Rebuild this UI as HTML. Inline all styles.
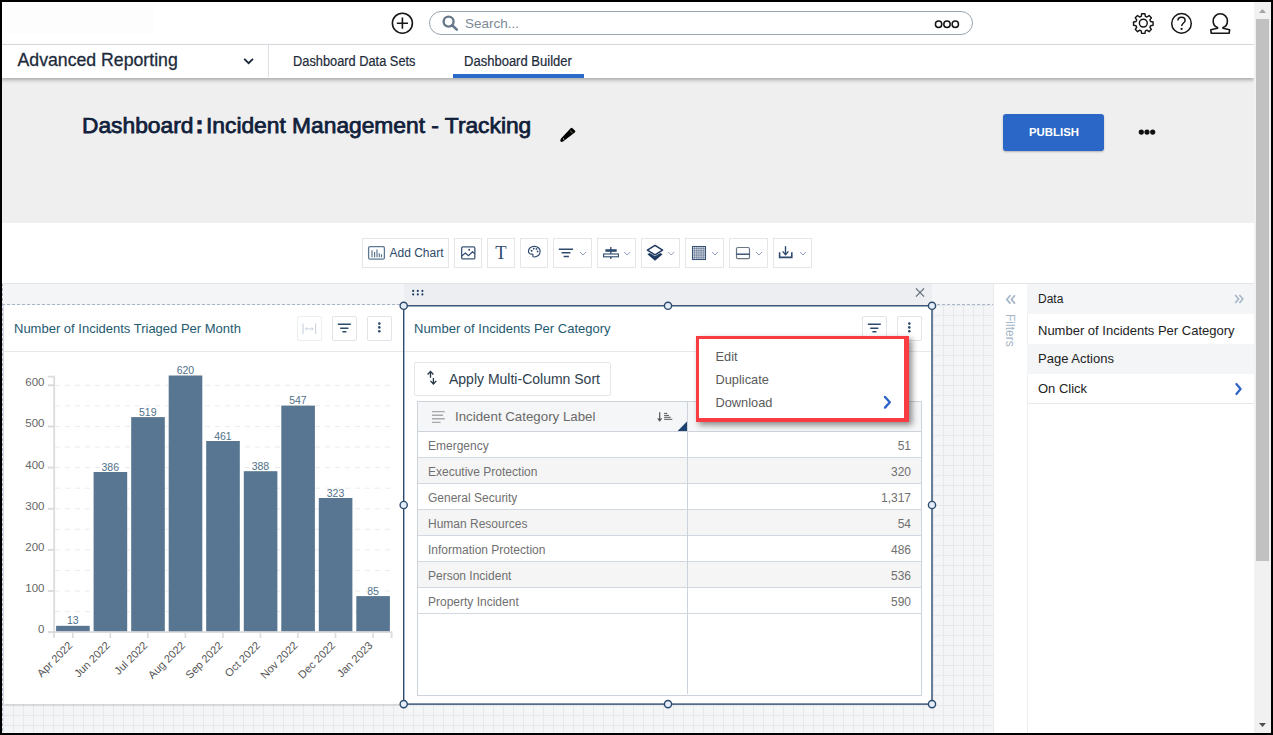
<!DOCTYPE html>
<html><head><meta charset="utf-8">
<style>
*{box-sizing:border-box;margin:0;padding:0}
html,body{width:1273px;height:735px;overflow:hidden;background:#000}
body{font-family:"Liberation Sans",sans-serif;position:relative}
.a{position:absolute}
#app{position:absolute;left:2px;top:2px;width:1269px;height:731px;background:#fff;overflow:hidden}
#pg{position:absolute;left:-2px;top:-2px;width:1273px;height:735px}
.txt{white-space:nowrap;line-height:1}
.tb{top:238px;height:30px;border:1px solid #e6e6e6;background:#fff}
.cb{width:25px;height:25px;border:1px solid #e1e4e8;border-radius:2px;background:#fff}
svg{overflow:visible}
svg text{font-family:"Liberation Sans",sans-serif}
</style></head>
<body>
<div id="app"><div id="pg">
<!-- top header -->
<div class="a" style="left:0;top:0;width:1254px;height:45px;background:#fff;border-bottom:1px solid #dde1e6"></div>
<div class="a" style="left:5px;top:3px;width:149px;height:31px;background:#fdfdfd"></div>
<!-- plus icon -->
<svg class="a" style="left:390px;top:11px" width="25" height="25" viewBox="0 0 25 25"><circle cx="12.4" cy="12.2" r="10" fill="none" stroke="#161616" stroke-width="1.6"/><path d="M12.4,6.6V17.8M6.8,12.2H18" stroke="#161616" stroke-width="1.6"/></svg>
<!-- search -->
<div class="a" style="left:429px;top:11px;width:544px;height:24px;border:1px solid #9aa4ae;border-radius:12px;background:#fff"></div>
<svg class="a" style="left:441px;top:14px" width="19" height="18" viewBox="0 0 19 18"><circle cx="7.6" cy="7.6" r="5" fill="none" stroke="#66788a" stroke-width="2.4"/><path d="M11.2,11.2L15.8,15.6" stroke="#66788a" stroke-width="2.6" stroke-linecap="round"/></svg>
<div class="a txt" style="left:465px;top:16.5px;font-size:13.5px;color:#7b8996">Search...</div>
<svg class="a" style="left:933px;top:19px" width="28" height="11" viewBox="0 0 28 11"><g fill="none" stroke="#141414" stroke-width="1.5"><circle cx="5.6" cy="5.3" r="3.2"/><circle cx="14" cy="5.3" r="3.2"/><circle cx="22.3" cy="5.3" r="3.2"/></g></svg>
<!-- gear -->
<svg class="a" style="left:1132.3px;top:12px" width="23" height="23" viewBox="0 0 24 24"><path fill="none" stroke="#161616" stroke-width="1.5" stroke-linejoin="round" d="M10.1,1.9h3.4l.5,2.6 1.6.7 2.2-1.5 2.4,2.4-1.5,2.2.7,1.6 2.6.5v3.4l-2.6.5-.7,1.6 1.5,2.2-2.4,2.4-2.2-1.5-1.6.7-.5,2.6h-3.4l-.5-2.6-1.6-.7-2.2,1.5-2.4-2.4 1.5-2.2-.7-1.6-2.6-.5v-3.4l2.6-.5.7-1.6-1.5-2.2 2.4-2.4 2.2,1.5 1.6-.7z"/><circle cx="11.8" cy="11.6" r="4.1" fill="none" stroke="#161616" stroke-width="1.5"/></svg>
<!-- help -->
<svg class="a" style="left:1169px;top:11px" width="25" height="25" viewBox="0 0 25 25"><circle cx="12.5" cy="12.4" r="9.8" fill="none" stroke="#161616" stroke-width="1.5"/><path d="M8.9,9.6c0-2.1 1.6-3.4 3.6-3.4s3.6,1.3 3.6,3.2c0,2.6-3.4,2.6-3.4,5.7" fill="none" stroke="#161616" stroke-width="1.5"/><circle cx="12.6" cy="17.9" r="1.1" fill="#161616"/></svg>
<!-- user -->
<svg class="a" style="left:1208.1px;top:11px" width="25" height="25" viewBox="0 0 25 25"><path fill="none" stroke="#161616" stroke-width="1.6" stroke-linejoin="round" d="M9.6,16.6C6.6,15.4 5.2,12.6 5.2,9.9c0-4.1 3.2-7.1 7.1-7.1s7.1,3 7.1,7.1c0,2.7-1.4,5.5-4.4,6.7v.6l6.6,1.5-.4,3.5H3.2l-.4-3.5 6.8-1.5z"/></svg>

<!-- gray header -->
<div class="a" style="left:0;top:78px;width:1254px;height:145px;background:#efefef"></div>
<!-- nav -->
<div class="a" style="left:0;top:45px;width:1254px;height:33px;background:#fff;box-shadow:0 2px 4px rgba(0,0,0,.30)"></div>
<div class="a txt" style="left:17.5px;top:52px;font-size:17.7px;color:#1d2b3b;-webkit-text-stroke:.3px #1d2b3b">Advanced Reporting</div>
<svg class="a" style="left:242px;top:56px" width="13" height="10" viewBox="0 0 13 10"><path d="M2.2,2.9L6.6,7.1L11,2.9" fill="none" stroke="#1b2a3a" stroke-width="1.9"/></svg>
<div class="a" style="left:268px;top:45px;width:1px;height:32px;background:#dde1e6"></div>
<div class="a txt" style="left:293px;top:54.2px;font-size:14px;color:#1d2b3b;-webkit-text-stroke:.2px #1d2b3b;transform-origin:0 0;transform:scaleX(.915)">Dashboard Data Sets</div>
<div class="a txt" style="left:464px;top:54.2px;font-size:14px;color:#1d2b3b;-webkit-text-stroke:.2px #1d2b3b;transform-origin:0 0;transform:scaleX(.93)">Dashboard Builder</div>
<div class="a" style="left:453px;top:74px;width:131px;height:4px;background:#2a6ac8"></div>

<div class="a txt" style="left:81.8px;top:115.2px;font-size:22px;color:#10203a;-webkit-text-stroke:.75px #10203a;transform-origin:0 0;transform:scaleX(1.035)">Dashboard<span style="margin:0 2.5px 0 2px;font-size:23px;line-height:0;font-weight:bold">:</span>Incident Management - Tracking</div>
<svg class="a" style="left:559px;top:126px" width="18" height="16" viewBox="0 0 18 16"><path d="M3.6,14.2L2.6,14.6L3,13.4L12.6,3.2L15,5.4z" fill="#000" stroke="#000" stroke-width="2.6" stroke-linejoin="round"/><path d="M11.2,4.8L13.4,6.9" stroke="#f0d9a8" stroke-width=".7"/><path d="M4,12.6L5.2,13.7" stroke="#fff" stroke-width="1"/></svg>
<div class="a" style="left:1003px;top:114px;width:101px;height:37px;background:#2b67c6;border-radius:3px;box-shadow:0 1px 2px rgba(0,0,0,.25)"></div>
<div class="a txt" style="left:1003.5px;top:126.6px;width:101px;text-align:center;font-size:11.4px;font-weight:bold;color:#fff">PUBLISH</div>
<svg class="a" style="left:1137px;top:128px" width="20" height="8" viewBox="0 0 20 8"><circle cx="4.3" cy="4.1" r="2.6" fill="#111"/><circle cx="10" cy="4.1" r="2.6" fill="#111"/><circle cx="15.7" cy="4.1" r="2.6" fill="#111"/></svg>
<!-- toolbar white -->
<div class="a" style="left:0;top:223px;width:1254px;height:60px;background:#fff"></div>
<div class="a tb" style="left:362px;width:87px"></div>
<svg class="a" style="left:367px;top:245px" width="19" height="16" viewBox="0 0 19 16"><rect x="1.6" y="1.6" width="15.8" height="12.6" rx="1.5" fill="none" stroke="#5d7793" stroke-width="1.3"/><path d="M5,5.2V12.2M7.6,7V12.2M10,4.6V12.2M12.3,8.2V12.2M14.5,9.2V12.2" stroke="#5d7793" stroke-width="1.2"/></svg>
<div class="a txt" style="left:389.5px;top:246.5px;font-size:12px;color:#2e4a6a">Add Chart</div>
<div class="a tb" style="left:454px;width:28px"></div>
<svg class="a" style="left:459px;top:245px" width="18" height="16" viewBox="0 0 18 16"><rect x="2.65" y="1.95" width="13.2" height="12" rx="1.3" fill="none" stroke="#3d5776" stroke-width="1.3"/><path d="M2.7,11L6.4,8L9.4,10.7L13.5,6.9L15.8,8.8" fill="none" stroke="#2e4a6e" stroke-width="1.2"/><circle cx="10.2" cy="4.7" r="1" fill="#2e4a6e"/></svg>
<div class="a tb" style="left:487px;width:28px"></div>
<div class="a txt" style="left:495.3px;top:243.5px;font-family:'Liberation Serif',serif;font-size:18.5px;color:#2e4a6e">T</div>
<div class="a tb" style="left:520px;width:28px"></div>
<svg class="a" style="left:526.6px;top:245.2px" width="14.6" height="12.8" viewBox="0 0 16 14"><path d="M8,1.4C4.4,1.4 1.6,3.8 1.6,6.8c0,2 1.6,3.4 3.3,3.1 1.2-.2 1.9.3 1.6,1.4-.4,1.3.6,2 1.8,1.8 3.6-.5 6.1-3.1 6.1-6.2S11.6,1.4 8,1.4z" fill="none" stroke="#2e4a6e" stroke-width="1.3"/><circle cx="5" cy="6.2" r="1.1" fill="#2e4a6e"/><circle cx="7.4" cy="4" r="1" fill="#2e4a6e"/><circle cx="10.4" cy="4.3" r="1" fill="#2e4a6e"/><circle cx="11.6" cy="7" r="1" fill="#2e4a6e"/></svg>
<div class="a tb" style="left:553px;width:39px"></div>
<svg class="a" style="left:557px;top:246px" width="18" height="12" viewBox="0 0 18 12"><path d="M1.8,3.2H16M4.6,6.7H13.4M6.6,10.4H11.9" stroke="#2e4a6e" stroke-width="1.5"/></svg>
<div class="a tb" style="left:597px;width:39px"></div>
<svg class="a" style="left:602px;top:246px" width="18" height="14" viewBox="0 0 18 14"><path d="M8.8,1V13" stroke="#2e4a6e" stroke-width="1.3"/><rect x="3.4" y="3.2" width="11.3" height="2.6" fill="#2e4a6e"/><rect x="1.6" y="8" width="14.8" height="2.8" fill="#fff" stroke="#2e4a6e" stroke-width="1.1"/></svg>
<div class="a tb" style="left:641px;width:39px"></div>
<svg class="a" style="left:645px;top:244px" width="20" height="18" viewBox="0 0 20 18"><path d="M10,1.4L17.6,6.2L10,10.8L2.4,6.2z" fill="none" stroke="#1f3a60" stroke-width="1.5" stroke-linejoin="round"/><path d="M2.4,10.2L4.6,8.9L10,12.2L15.4,8.9L17.6,10.2L10,16.8z" fill="#1f3a60"/></svg>
<div class="a tb" style="left:685px;width:39px"></div>
<svg class="a" style="left:691px;top:245px" width="16" height="16" viewBox="0 0 16 16"><g stroke="#3a5577" stroke-width=".55" fill="none"><rect x="1.5" y="1.5" width="13" height="13" stroke-width="1.1"/><path d="M3.4,1.5V14.5M5.3,1.5V14.5M7.1,1.5V14.5M9,1.5V14.5M10.8,1.5V14.5M12.7,1.5V14.5M1.5,3.4H14.5M1.5,5.3H14.5M1.5,7.1H14.5M1.5,9H14.5M1.5,10.8H14.5M1.5,12.7H14.5"/></g></svg>
<div class="a tb" style="left:729px;width:39px"></div>
<svg class="a" style="left:735px;top:246px" width="16" height="14" viewBox="0 0 16 14"><rect x="1.5" y="1.5" width="13" height="11.2" rx="1.4" fill="none" stroke="#6b7682" stroke-width="1.2"/><path d="M1.5,8.2H14.5" stroke="#2e4a6e" stroke-width="1.4"/></svg>
<div class="a tb" style="left:773px;width:39px"></div>
<svg class="a" style="left:778px;top:245px" width="16" height="14" viewBox="0 0 16 14"><path d="M7.5,1.2V9.4" stroke="#2e4a6e" stroke-width="1.4"/><path d="M4.6,6.4L7.5,9.6L10.4,6.4" fill="none" stroke="#2e4a6e" stroke-width="1.4"/><path d="M1.6,7.2V12.4H13.8V7.2" fill="none" stroke="#2e4a6e" stroke-width="1.6"/></svg>
<svg class="a" style="left:0;top:0;pointer-events:none" width="830" height="270" viewBox="0 0 830 270"><g fill="none" stroke="#8e9bc4" stroke-width="1"><path d="M580,252L583,255L586,252"/><path d="M624.2,252L627.2,255L630.2,252"/><path d="M668.2,252L671.2,255L674.2,252"/><path d="M712,252L715,255L718,252"/><path d="M756,252L759,255L762,252"/><path d="M800,252L803,255L806,252"/></g></svg>
<!-- canvas -->
<div class="a" style="left:0;top:283px;width:993px;height:452px;background:#f4f5f7;border-top:1px solid #e3e5e8"></div>
<div class="a" style="left:0;top:305px;width:993px;height:430px;background-image:linear-gradient(to right,#e7e8eb 1px,transparent 1px),linear-gradient(to bottom,#e7e8eb 1px,transparent 1px);background-size:10px 10px;background-position:3px 10px"></div>
<!-- dashed guides -->
<div class="a" style="left:2px;top:304px;width:991px;height:1px;background-image:linear-gradient(to right,#a9b7c6 3px,transparent 3px);background-size:5px 1px"></div>
<div class="a" style="left:2px;top:283px;width:1px;height:452px;background-image:linear-gradient(to bottom,#a9b7c6 3px,transparent 3px);background-size:1px 5px"></div>

<!-- card 1 -->
<div class="a" style="left:4px;top:305px;width:400px;height:399px;background:#fff;box-shadow:0 1px 2px rgba(0,0,0,.18)"></div>
<div class="a txt" style="left:14px;top:322.3px;font-size:13px;color:#245a70">Number of Incidents Triaged Per Month</div>
<div class="a cb" style="left:297px;top:316px;border-color:#eceef0"></div>
<svg class="a" style="left:297px;top:316px" width="25" height="25" viewBox="0 0 25 25"><path d="M6,7.6V18M18.6,7.6V18" stroke="#cdd6e0" stroke-width="1.2"/><path d="M8.4,12.8H16.2M10,11.3L8.4,12.8L10,14.3M14.6,11.3L16.2,12.8L14.6,14.3" fill="none" stroke="#cdd6e0" stroke-width="1"/></svg>
<div class="a cb" style="left:332px;top:316px"></div>
<svg class="a" style="left:332px;top:316px" width="25" height="25" viewBox="0 0 25 25"><path d="M5.8,8.2H18.8M8.2,12.2H16.4M10.4,15.8H14.4" stroke="#2b4a6d" stroke-width="1.6"/></svg>
<div class="a cb" style="left:367px;top:316px"></div>
<svg class="a" style="left:367px;top:316px" width="25" height="25" viewBox="0 0 25 25"><circle cx="12.3" cy="7.6" r="1.3" fill="#2b4a6d"/><circle cx="12.3" cy="11.4" r="1.3" fill="#2b4a6d"/><circle cx="12.3" cy="15.2" r="1.3" fill="#2b4a6d"/></svg>
<div class="a" style="left:4px;top:351px;width:400px;height:1px;background:#e6e8eb"></div>
<svg class="a" style="left:0;top:0" width="420" height="735" viewBox="0 0 420 735">
<line x1="55" x2="391" y1="611.6" y2="611.6" stroke="#ebebeb" stroke-width="1" stroke-dasharray="5,5"/>
<line x1="55" x2="391" y1="591.1" y2="591.1" stroke="#ebebeb" stroke-width="1" stroke-dasharray="5,5"/>
<line x1="55" x2="391" y1="570.5" y2="570.5" stroke="#ebebeb" stroke-width="1" stroke-dasharray="5,5"/>
<line x1="55" x2="391" y1="549.9" y2="549.9" stroke="#ebebeb" stroke-width="1" stroke-dasharray="5,5"/>
<line x1="55" x2="391" y1="529.3" y2="529.3" stroke="#ebebeb" stroke-width="1" stroke-dasharray="5,5"/>
<line x1="55" x2="391" y1="508.8" y2="508.8" stroke="#ebebeb" stroke-width="1" stroke-dasharray="5,5"/>
<line x1="55" x2="391" y1="488.2" y2="488.2" stroke="#ebebeb" stroke-width="1" stroke-dasharray="5,5"/>
<line x1="55" x2="391" y1="467.6" y2="467.6" stroke="#ebebeb" stroke-width="1" stroke-dasharray="5,5"/>
<line x1="55" x2="391" y1="447.0" y2="447.0" stroke="#ebebeb" stroke-width="1" stroke-dasharray="5,5"/>
<line x1="55" x2="391" y1="426.5" y2="426.5" stroke="#ebebeb" stroke-width="1" stroke-dasharray="5,5"/>
<line x1="55" x2="391" y1="405.9" y2="405.9" stroke="#ebebeb" stroke-width="1" stroke-dasharray="5,5"/>
<line x1="55" x2="391" y1="385.3" y2="385.3" stroke="#ebebeb" stroke-width="1" stroke-dasharray="5,5"/>
<path d="M48,376.6H54.2V632.2H48" fill="none" stroke="#dcdcdc" stroke-width="1.8"/>
<line x1="48" x2="54" y1="632.2" y2="632.2" stroke="#dcdcdc" stroke-width="2"/>
<text x="44.5" y="633.1" text-anchor="end" font-size="11.5" fill="#666">0</text>
<line x1="48" x2="54" y1="591.1" y2="591.1" stroke="#dcdcdc" stroke-width="2"/>
<text x="44.5" y="592.0" text-anchor="end" font-size="11.5" fill="#666">100</text>
<line x1="48" x2="54" y1="549.9" y2="549.9" stroke="#dcdcdc" stroke-width="2"/>
<text x="44.5" y="550.8" text-anchor="end" font-size="11.5" fill="#666">200</text>
<line x1="48" x2="54" y1="508.8" y2="508.8" stroke="#dcdcdc" stroke-width="2"/>
<text x="44.5" y="509.7" text-anchor="end" font-size="11.5" fill="#666">300</text>
<line x1="48" x2="54" y1="467.6" y2="467.6" stroke="#dcdcdc" stroke-width="2"/>
<text x="44.5" y="468.5" text-anchor="end" font-size="11.5" fill="#666">400</text>
<line x1="48" x2="54" y1="426.5" y2="426.5" stroke="#dcdcdc" stroke-width="2"/>
<text x="44.5" y="427.4" text-anchor="end" font-size="11.5" fill="#666">500</text>
<line x1="48" x2="54" y1="385.3" y2="385.3" stroke="#dcdcdc" stroke-width="2"/>
<text x="44.5" y="386.2" text-anchor="end" font-size="11.5" fill="#666">600</text>
<path d="M54,638V632.2H391.6V638" fill="none" stroke="#dcdcdc" stroke-width="1.8"/>
<rect x="56.1" y="625.8" width="33.6" height="5.4" fill="#587591"/>
<text x="72.8" y="624.4" text-anchor="middle" font-size="10.5" fill="#4f7189">13</text>
<line x1="72.8" x2="72.8" y1="632" y2="638" stroke="#dcdcdc" stroke-width="1.6"/>
<text transform="translate(73.2,646.1) rotate(-45)" text-anchor="end" font-size="11" fill="#555">Apr 2022</text>
<rect x="93.6" y="472.0" width="33.6" height="159.2" fill="#587591"/>
<text x="110.3" y="470.6" text-anchor="middle" font-size="10.5" fill="#4f7189">386</text>
<line x1="110.3" x2="110.3" y1="632" y2="638" stroke="#dcdcdc" stroke-width="1.6"/>
<text transform="translate(110.7,646.1) rotate(-45)" text-anchor="end" font-size="11" fill="#555">Jun 2022</text>
<rect x="131.2" y="417.1" width="33.6" height="214.1" fill="#587591"/>
<text x="147.8" y="415.7" text-anchor="middle" font-size="10.5" fill="#4f7189">519</text>
<line x1="147.8" x2="147.8" y1="632" y2="638" stroke="#dcdcdc" stroke-width="1.6"/>
<text transform="translate(148.2,646.1) rotate(-45)" text-anchor="end" font-size="11" fill="#555">Jul 2022</text>
<rect x="168.7" y="375.5" width="33.6" height="255.8" fill="#587591"/>
<text x="185.4" y="374.1" text-anchor="middle" font-size="10.5" fill="#4f7189">620</text>
<line x1="185.4" x2="185.4" y1="632" y2="638" stroke="#dcdcdc" stroke-width="1.6"/>
<text transform="translate(185.8,646.1) rotate(-45)" text-anchor="end" font-size="11" fill="#555">Aug 2022</text>
<rect x="206.2" y="441.0" width="33.6" height="190.2" fill="#587591"/>
<text x="222.9" y="439.6" text-anchor="middle" font-size="10.5" fill="#4f7189">461</text>
<line x1="222.9" x2="222.9" y1="632" y2="638" stroke="#dcdcdc" stroke-width="1.6"/>
<text transform="translate(223.3,646.1) rotate(-45)" text-anchor="end" font-size="11" fill="#555">Sep 2022</text>
<rect x="243.8" y="471.2" width="33.6" height="160.0" fill="#587591"/>
<text x="260.4" y="469.8" text-anchor="middle" font-size="10.5" fill="#4f7189">388</text>
<line x1="260.4" x2="260.4" y1="632" y2="638" stroke="#dcdcdc" stroke-width="1.6"/>
<text transform="translate(260.8,646.1) rotate(-45)" text-anchor="end" font-size="11" fill="#555">Oct 2022</text>
<rect x="281.3" y="405.6" width="33.6" height="225.6" fill="#587591"/>
<text x="297.9" y="404.2" text-anchor="middle" font-size="10.5" fill="#4f7189">547</text>
<line x1="297.9" x2="297.9" y1="632" y2="638" stroke="#dcdcdc" stroke-width="1.6"/>
<text transform="translate(298.3,646.1) rotate(-45)" text-anchor="end" font-size="11" fill="#555">Nov 2022</text>
<rect x="318.8" y="498.0" width="33.6" height="133.2" fill="#587591"/>
<text x="335.5" y="496.6" text-anchor="middle" font-size="10.5" fill="#4f7189">323</text>
<line x1="335.5" x2="335.5" y1="632" y2="638" stroke="#dcdcdc" stroke-width="1.6"/>
<text transform="translate(335.9,646.1) rotate(-45)" text-anchor="end" font-size="11" fill="#555">Dec 2022</text>
<rect x="356.3" y="596.1" width="33.6" height="35.1" fill="#587591"/>
<text x="373.0" y="594.7" text-anchor="middle" font-size="10.5" fill="#4f7189">85</text>
<line x1="373.0" x2="373.0" y1="632" y2="638" stroke="#dcdcdc" stroke-width="1.6"/>
<text transform="translate(373.4,646.1) rotate(-45)" text-anchor="end" font-size="11" fill="#555">Jan 2023</text>
</svg>

<!-- card 2 -->
<div class="a" style="left:404px;top:283.5px;width:528px;height:22px;background:#eceef1"></div>
<svg class="a" style="left:410px;top:287px" width="16" height="10" viewBox="0 0 16 10"><g fill="#1f3a60"><circle cx="3.2" cy="3.9" r="1.05"/><circle cx="7.8" cy="3.9" r="1.05"/><circle cx="12.4" cy="3.9" r="1.05"/><circle cx="3.2" cy="7.4" r="1.05"/><circle cx="7.8" cy="7.4" r="1.05"/><circle cx="12.4" cy="7.4" r="1.05"/></g></svg>
<svg class="a" style="left:913px;top:286px" width="14" height="13" viewBox="0 0 14 13"><path d="M2.9,2.4L11.1,10.6M11.1,2.4L2.9,10.6" stroke="#5b6672" stroke-width="1.1"/></svg>
<div class="a" style="left:404px;top:306px;width:528px;height:398px;background:#fff"></div>
<div class="a txt" style="left:414px;top:322px;font-size:13px;color:#245a70">Number of Incidents Per Category</div>
<div class="a cb" style="left:862px;top:316px"></div>
<svg class="a" style="left:862px;top:316px" width="25" height="25" viewBox="0 0 25 25"><path d="M5.8,8.2H18.8M8.2,12.2H16.4M10.4,15.8H14.4" stroke="#2b4a6d" stroke-width="1.6"/></svg>
<div class="a cb" style="left:897px;top:316px"></div>
<svg class="a" style="left:897px;top:316px" width="25" height="25" viewBox="0 0 25 25"><circle cx="12.3" cy="7.6" r="1.3" fill="#2b4a6d"/><circle cx="12.3" cy="11.4" r="1.3" fill="#2b4a6d"/><circle cx="12.3" cy="15.2" r="1.3" fill="#2b4a6d"/></svg>
<div class="a" style="left:404px;top:351px;width:528px;height:1px;background:#e6e8eb"></div>
<div class="a" style="left:414px;top:362px;width:197px;height:34px;border:1px solid #e4e6e9;border-radius:2px;background:#fff"></div>
<svg class="a" style="left:420px;top:365px" width="20" height="24" viewBox="420 365 20 24"><path d="M430.5,377.7V371.6M427.6,374.5L430.5,371.4L433.4,374.5M433.4,378V383.8M430.5,380.9L433.4,384L436.3,380.9" fill="none" stroke="#253445" stroke-width="1.3"/></svg>
<div class="a txt" style="left:449px;top:372px;font-size:14px;color:#2f3e4e">Apply Multi-Column Sort</div>
<!-- table -->
<div class="a" style="left:417px;top:401px;width:505px;height:295px;border:1px solid #cdd3db;background:#fff"></div>
<div class="a" style="left:418px;top:402px;width:503px;height:30px;background:#f5f6f7;border-bottom:1px solid #cdd3db"></div>
<div class="a" style="left:418px;top:432px;width:503px;height:26px;background:#fff;border-bottom:1px solid #d2d8e0"></div>
<div class="a txt" style="left:428px;top:440.0px;font-size:12px;color:#707070">Emergency</div>
<div class="a txt" style="left:688px;top:440.0px;width:223px;text-align:right;font-size:12px;color:#707070">51</div>
<div class="a" style="left:418px;top:458px;width:503px;height:26px;background:#f5f5f5;border-bottom:1px solid #d2d8e0"></div>
<div class="a txt" style="left:428px;top:466.0px;font-size:12px;color:#707070">Executive Protection</div>
<div class="a txt" style="left:688px;top:466.0px;width:223px;text-align:right;font-size:12px;color:#707070">320</div>
<div class="a" style="left:418px;top:484px;width:503px;height:26px;background:#fff;border-bottom:1px solid #d2d8e0"></div>
<div class="a txt" style="left:428px;top:492.0px;font-size:12px;color:#707070">General Security</div>
<div class="a txt" style="left:688px;top:492.0px;width:223px;text-align:right;font-size:12px;color:#707070">1,317</div>
<div class="a" style="left:418px;top:510px;width:503px;height:26px;background:#f5f5f5;border-bottom:1px solid #d2d8e0"></div>
<div class="a txt" style="left:428px;top:518.0px;font-size:12px;color:#707070">Human Resources</div>
<div class="a txt" style="left:688px;top:518.0px;width:223px;text-align:right;font-size:12px;color:#707070">54</div>
<div class="a" style="left:418px;top:536px;width:503px;height:26px;background:#fff;border-bottom:1px solid #d2d8e0"></div>
<div class="a txt" style="left:428px;top:544.0px;font-size:12px;color:#707070">Information Protection</div>
<div class="a txt" style="left:688px;top:544.0px;width:223px;text-align:right;font-size:12px;color:#707070">486</div>
<div class="a" style="left:418px;top:562px;width:503px;height:26px;background:#f5f5f5;border-bottom:1px solid #d2d8e0"></div>
<div class="a txt" style="left:428px;top:570.0px;font-size:12px;color:#707070">Person Incident</div>
<div class="a txt" style="left:688px;top:570.0px;width:223px;text-align:right;font-size:12px;color:#707070">536</div>
<div class="a" style="left:418px;top:588px;width:503px;height:26px;background:#fff;border-bottom:1px solid #d2d8e0"></div>
<div class="a txt" style="left:428px;top:596.0px;font-size:12px;color:#707070">Property Incident</div>
<div class="a txt" style="left:688px;top:596.0px;width:223px;text-align:right;font-size:12px;color:#707070">590</div>
<div class="a" style="left:687px;top:402px;width:1px;height:292px;background:#cdd3db"></div>
<svg class="a" style="left:430px;top:409px" width="17" height="16" viewBox="0 0 17 16"><path d="M2,2.6H14.8M2,6.2H13M2,9.8H14.8M2,13.4H10.6" stroke="#aaa" stroke-width="1.4"/></svg>
<div class="a txt" style="left:455px;top:409.6px;font-size:13.3px;color:#6a6a6a">Incident Category Label</div>
<svg class="a" style="left:650px;top:405px" width="40" height="30" viewBox="650 405 40 30"><path d="M659.7,412.2V420.2M657.8,418.4L659.7,420.8L661.6,418.4" fill="none" stroke="#555" stroke-width="1.2"/><path d="M664.1,413.4H667.3M664.1,415.4H669M664.1,417.3H670.8M664.1,419.3H672.3" stroke="#555" stroke-width="1"/><path d="M687,421.6V431H677.6z" fill="#1f4272"/></svg>

<!-- selection -->
<svg class="a" style="left:0;top:0" width="1000" height="735" viewBox="0 0 1000 735"><rect x="403.7" y="305.8" width="528.3" height="398.3" fill="none" stroke="#2c4a6e" stroke-width="1.4"/>
<g fill="#e4eef8" stroke="#2c4a6e" stroke-width="1.4"><circle cx="403.7" cy="305.8" r="3.6"/><circle cx="668" cy="305.8" r="3.6"/><circle cx="932" cy="305.8" r="3.6"/><circle cx="403.7" cy="505" r="3.6"/><circle cx="932" cy="505" r="3.6"/><circle cx="403.7" cy="704.1" r="3.6"/><circle cx="668" cy="704.1" r="3.6"/><circle cx="932" cy="704.1" r="3.6"/></g></svg>

<!-- menu -->
<div class="a" style="left:696px;top:336px;width:212.5px;height:86px;border-style:solid;border-color:#f83c41;border-width:3.8px 5px 4.6px 3.8px;background:#fff;box-shadow:3px 3px 6px rgba(0,0,0,.45)"></div>
<div class="a txt" style="left:715.5px;top:351.2px;font-size:12.8px;color:#5a5a5a">Edit</div>
<div class="a txt" style="left:715.5px;top:373.8px;font-size:12.8px;color:#5a5a5a">Duplicate</div>
<div class="a txt" style="left:715.5px;top:397.1px;font-size:12.8px;color:#5a5a5a">Download</div>
<svg class="a" style="left:881px;top:394px" width="14" height="17" viewBox="0 0 14 17"><path d="M4,3L8.8,8.3L4,13.6" fill="none" stroke="#2d63c8" stroke-width="2.4" stroke-linecap="round" stroke-linejoin="round"/></svg>

<!-- filters strip -->
<div class="a" style="left:993px;top:283px;width:34px;height:452px;background:#fff;border-left:1px solid #e9ebee"></div>
<svg class="a" style="left:1003px;top:292px" width="16" height="16" viewBox="0 0 16 16"><path d="M7.4,3.2L3.8,7.4L7.4,11.6M12,3.2L8.4,7.4L12,11.6" fill="none" stroke="#a6b6c8" stroke-width="1.7"/></svg>
<div class="a txt" style="left:1004px;top:314px;font-size:12px;color:#a6b6c8;transform-origin:0 0;transform:translate(12px,0) rotate(90deg)">Filters</div>

<!-- right panel -->
<div class="a" style="left:1027px;top:283px;width:227px;height:452px;background:#fff;border-left:1px solid #eceef0"></div>
<div class="a" style="left:1027px;top:284px;width:227px;height:30px;background:#f4f5f7"></div>
<div class="a txt" style="left:1038px;top:293.2px;font-size:12px;color:#222">Data</div>
<svg class="a" style="left:1232px;top:292px" width="14" height="14" viewBox="0 0 14 14"><path d="M3.2,3L6.6,7L3.2,11M7.4,3L10.8,7L7.4,11" fill="none" stroke="#a6b6c8" stroke-width="1.6"/></svg>
<div class="a txt" style="left:1038px;top:323.5px;font-size:13px;color:#222">Number of Incidents Per Category</div>
<div class="a" style="left:1027px;top:344px;width:227px;height:29.5px;background:#f4f5f7"></div>
<div class="a txt" style="left:1038px;top:352.4px;font-size:13px;color:#222">Page Actions</div>
<div class="a txt" style="left:1038px;top:382.4px;font-size:13px;color:#222">On Click</div>
<svg class="a" style="left:1231.5px;top:381px" width="14" height="16" viewBox="0 0 14 16"><path d="M4.4,3L8.6,8L4.4,13" fill="none" stroke="#2d63c8" stroke-width="2.2" stroke-linecap="round" stroke-linejoin="round"/></svg>
<div class="a" style="left:1027px;top:403px;width:227px;height:1px;background:#e6e8eb"></div>
<div class="a" style="left:0;top:283px;width:1254px;height:1px;background:#e3e5e8"></div>

<!-- scrollbar -->
<div class="a" style="left:1254px;top:0;width:17px;height:735px;background:#f1f1f1"></div>
<div class="a" style="left:1256px;top:19px;width:13px;height:542px;background:#c1c1c1"></div>
<svg class="a" style="left:1254px;top:0" width="17" height="735" viewBox="0 0 17 735"><path d="M5,13L8.5,9L12,13z" fill="#a3a3a3"/><path d="M5,723L8.5,727L12,723z" fill="#505050"/></svg>

</div></div>
</body></html>
